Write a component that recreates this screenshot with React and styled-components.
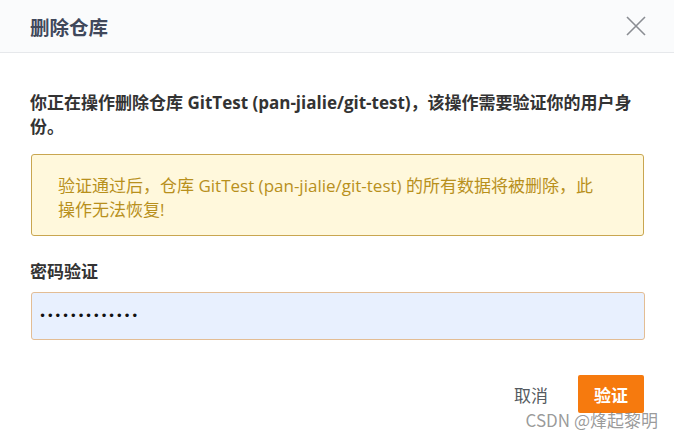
import React from "react";
import styled, { createGlobalStyle } from "styled-components";

const GlobalStyle = createGlobalStyle`
  html, body {
    margin: 0;
    padding: 0;
    background: #ffffff;
  }
  body {
    font-family: "Open Sans", "Noto Sans CJK SC", sans-serif;
  }
`;

const Dialog = styled.div`
  position: relative;
  width: 674px;
  height: 440px;
  background: #ffffff;
  overflow: hidden;
`;

const Header = styled.div`
  display: flex;
  align-items: center;
  justify-content: space-between;
  height: 53px;
  padding: 0 26px 0 30px;
  background: #fafbfc;
  border-bottom: 1px solid #e6e8eb;
  box-sizing: border-box;
`;

const Title = styled.h2`
  margin: 0;
  font-size: 19.5px;
  font-weight: 700;
  color: #40485b;
  font-family: "Noto Sans CJK SC", sans-serif;
`;

const CloseButton = styled.button`
  display: flex;
  align-items: center;
  justify-content: center;
  width: 24px;
  height: 24px;
  padding: 0;
  border: none;
  background: transparent;
  cursor: pointer;
`;

const Body = styled.div`
  padding: 38px 30px 0 30px;
`;

const Intro = styled.p`
  margin: 0;
  font-size: 17px;
  line-height: 24px;
  font-weight: 700;
  color: #333333;
`;

const Warning = styled.div`
  margin: 15px 0 0 1px;
  padding: 19px 46px 13px 26px;
  background: #fff8dc;
  border: 1px solid #c9a650;
  border-radius: 3px;
  font-size: 17px;
  line-height: 24px;
  color: #b8901c;
`;

const Label = styled.div`
  margin-top: 23px;
  font-size: 17px;
  line-height: 24px;
  font-weight: 700;
  color: #333333;
  font-family: "Noto Sans CJK SC", sans-serif;
`;

const Input = styled.input`
  display: block;
  box-sizing: border-box;
  width: 614px;
  height: 48px;
  margin: 9px 0 0 1px;
  padding: 0 7px;
  background: #e8f0fe;
  border: 1px solid #e3bd94;
  border-radius: 3px;
  font-size: 12px;
  letter-spacing: 0.6px;
  color: #111111;
  font-family: "DejaVu Sans", sans-serif;
  outline: none;
`;

const Footer = styled.div`
  display: flex;
  justify-content: flex-end;
  align-items: center;
  gap: 30px;
  margin-top: 35px;
  padding-right: 30px;
`;

const Button = styled.button`
  height: 38px;
  padding: ${(p) => (p.$primary ? "0 16px" : "0")};
  border: none;
  border-radius: 2px;
  font-size: 17px;
  font-family: "Noto Sans CJK SC", sans-serif;
  font-weight: ${(p) => (p.$primary ? 700 : 400)};
  color: ${(p) => (p.$primary ? "#ffffff" : "#555a60")};
  background: ${(p) => (p.$primary ? "#f67a0e" : "transparent")};
  cursor: pointer;
`;

const Watermark = styled.div`
  position: absolute;
  right: 16px;
  bottom: 8px;
  font-size: 17px;
  color: rgba(110, 110, 110, 0.7);
  font-family: "Noto Sans CJK SC", sans-serif;
  pointer-events: none;
`;

export default function App() {
  return (
    <>
      <GlobalStyle />
      <Dialog>
        <Header>
          <Title>删除仓库</Title>
          <CloseButton aria-label="关闭">
            <svg width="22" height="22" viewBox="0 0 22 22">
              <path
                d="M2 2 L20 20 M20 2 L2 20"
                stroke="#8a8d92"
                strokeWidth="1.6"
                fill="none"
              />
            </svg>
          </CloseButton>
        </Header>
        <Body>
          <Intro>
            你正在操作删除仓库 GitTest (pan-jialie/git-test)，该操作需要验证你的用户身份。
          </Intro>
          <Warning>
            验证通过后，仓库 GitTest (pan-jialie/git-test) 的所有数据将被删除，此操作无法恢复!
          </Warning>
          <Label>密码验证</Label>
          <Input type="password" defaultValue="abcdefghijklm" readOnly />
        </Body>
        <Footer>
          <Button>取消</Button>
          <Button $primary>验证</Button>
        </Footer>
        <Watermark>CSDN @烽起黎明</Watermark>
      </Dialog>
    </>
  );
}
